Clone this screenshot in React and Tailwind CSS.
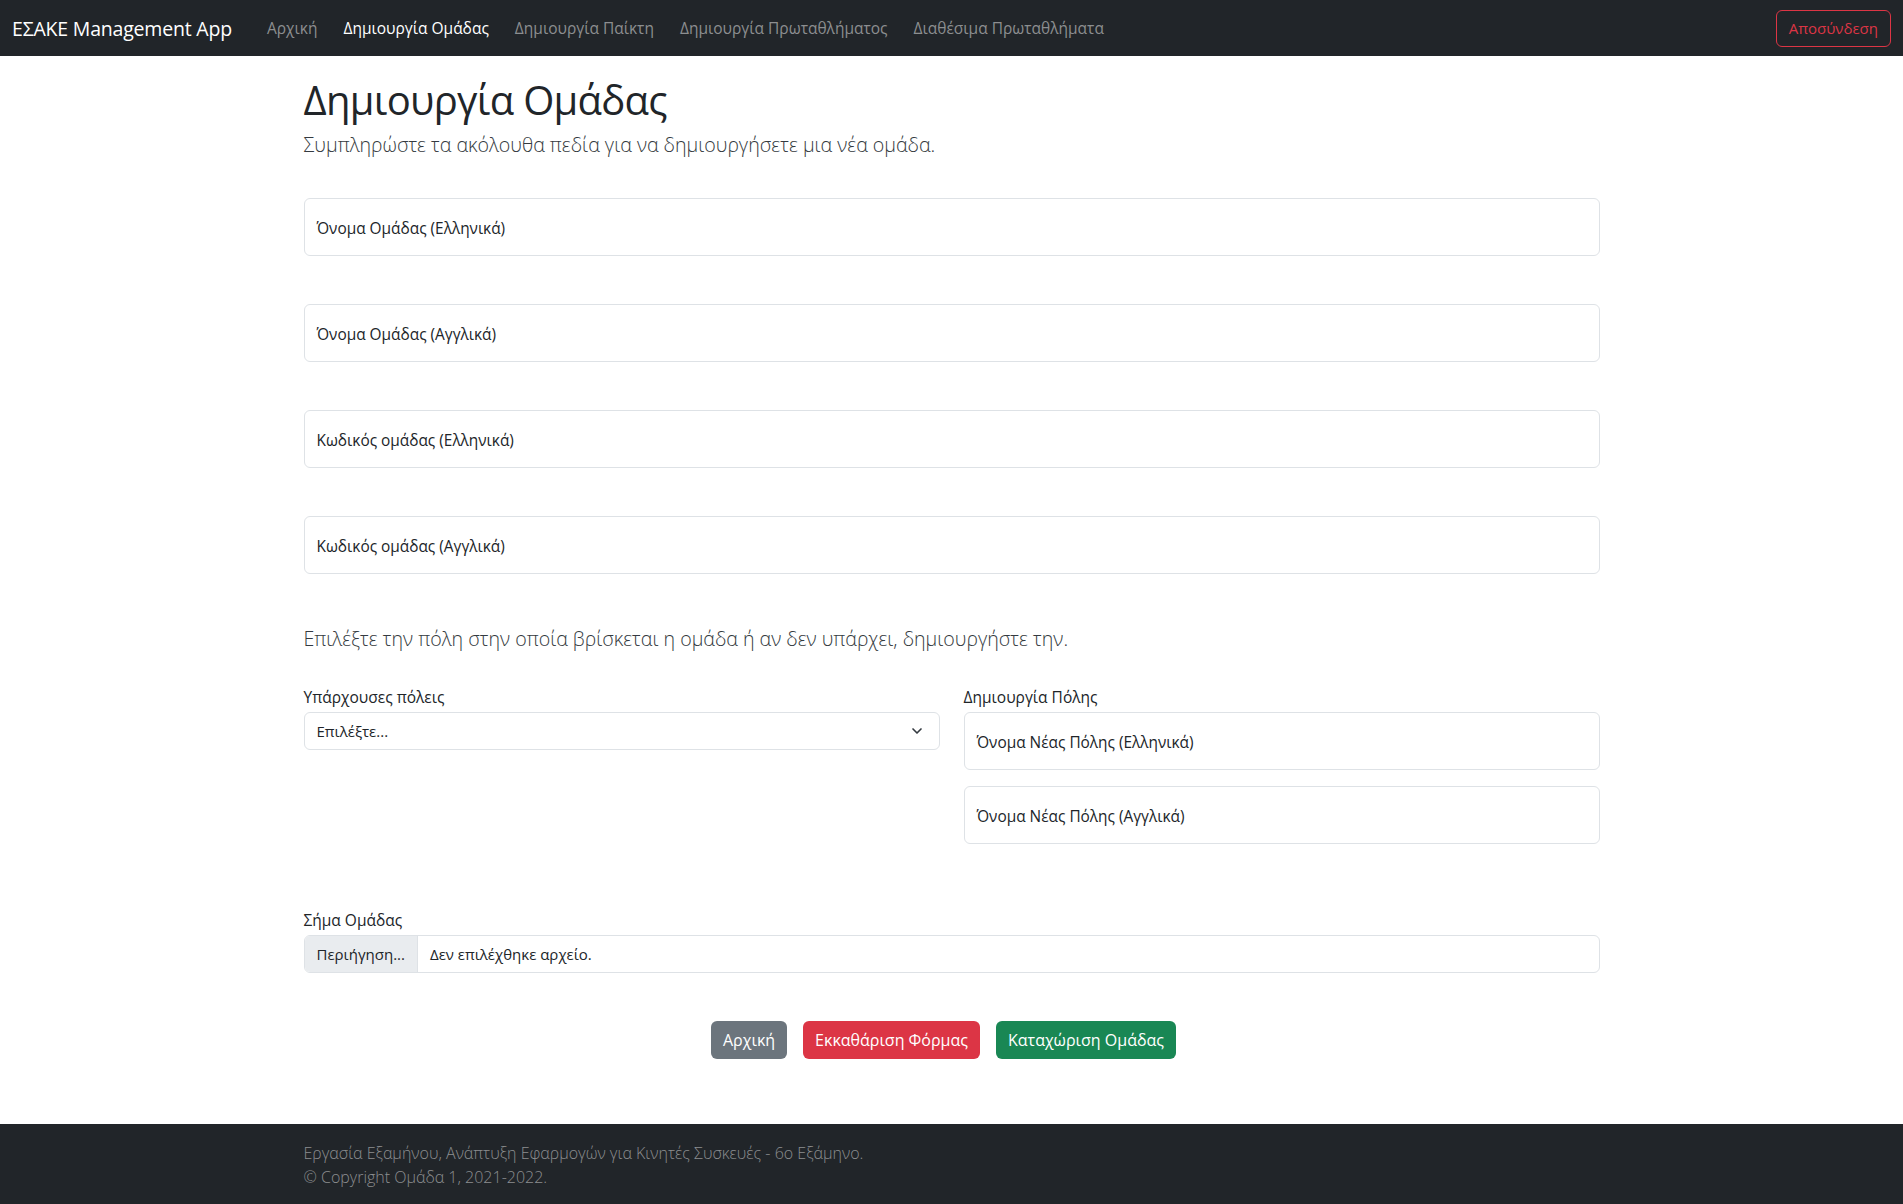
import { ChevronDown } from "lucide-react";

const font = { fontFamily: "'Open Sans', 'Noto Sans', sans-serif" };

const navLinks = [
  { label: "Αρχική", active: false },
  { label: "Δημιουργία Ομάδας", active: true },
  { label: "Δημιουργία Παίκτη", active: false },
  { label: "Δημιουργία Πρωταθλήματος", active: false },
  { label: "Διαθέσιμα Πρωταθλήματα", active: false },
];

// floating-label style input (bootstrap form-floating look)
const FloatingInput = ({ label, className = "" }) => (
  <div
    className={`h-[58px] w-full rounded-[6px] border border-[#dee2e6] bg-white flex items-center px-3 pt-[3px] text-[15.4px] text-[#212529] ${className}`}
  >
    {label}
  </div>
);

export default function App() {
  return (
    <div className="min-h-[1204px] flex flex-col bg-white text-[#212529]" style={font}>
      {/* Navbar */}
      <nav className="h-[56px] bg-[#212529] flex items-center px-3 pt-[2px]">
        <span className="text-[19.5px] text-white mr-[22px] tracking-[-0.2px]">
          ΕΣΑΚΕ Management App
        </span>
        <ul className="flex items-center">
          {navLinks.map((l) => (
            <li
              key={l.label}
              className={`px-[13px] text-[15.5px] ${
                l.active ? "text-white" : "text-[#8c8e90]"
              }`}
            >
              {l.label}
            </li>
          ))}
        </ul>
        <button className="ml-auto h-[37px] px-3 rounded-[6px] border border-[#dc3545] text-[#dc3545] text-[15px] mb-[2px]">
          Αποσύνδεση
        </button>
      </nav>

      {/* Main */}
      <main className="flex-1 w-[1296px] mx-auto pt-[20px] pb-[64px]">
        <h1 className="text-[40px] leading-[48px] font-normal tracking-[-0.7px] mb-[6px]">
          Δημιουργία Ομάδας
        </h1>
        <p className="text-[19.6px] leading-[30px] font-light text-[#343a40] mb-[38px]">
          Συμπληρώστε τα ακόλουθα πεδία για να δημιουργήσετε μια νέα ομάδα.
        </p>

        <div className="flex flex-col gap-[48px]">
          <FloatingInput label="Όνομα Ομάδας (Ελληνικά)" />
          <FloatingInput label="Όνομα Ομάδας (Αγγλικά)" />
          <FloatingInput label="Κωδικός ομάδας (Ελληνικά)" />
          <FloatingInput label="Κωδικός ομάδας (Αγγλικά)" />
        </div>

        <p className="text-[19.6px] leading-[30px] font-light text-[#343a40] mt-[50px] mb-[31px]">
          Επιλέξτε την πόλη στην οποία βρίσκεται η ομάδα ή αν δεν υπάρχει, δημιουργήστε την.
        </p>

        <div className="grid grid-cols-2 gap-x-6">
          <div>
            <label className="block text-[15.5px] leading-[24px] mb-[3px]">
              Υπάρχουσες πόλεις
            </label>
            <div className="h-[38px] rounded-[6px] border border-[#dee2e6] flex items-center justify-between pl-3 pr-[14px] text-[15px]">
              <span>Επιλέξτε...</span>
              <ChevronDown className="w-4 h-4 text-[#343a40]" strokeWidth={2.5} />
            </div>
          </div>
          <div>
            <label className="block text-[15.5px] leading-[24px] mb-[3px]">
              Δημιουργία Πόλης
            </label>
            <FloatingInput label="Όνομα Νέας Πόλης (Ελληνικά)" className="mb-4" />
            <FloatingInput label="Όνομα Νέας Πόλης (Αγγλικά)" />
          </div>
        </div>

        <div className="mt-[64px]">
          <label className="block text-[15.5px] leading-[24px] mb-[3px]">Σήμα Ομάδας</label>
          <div className="h-[38px] rounded-[6px] border border-[#dee2e6] flex items-stretch overflow-hidden text-[15px]">
            <span className="bg-[#e9ecef] border-r border-[#dee2e6] px-3 flex items-center">
              Περιήγηση...
            </span>
            <span className="px-3 flex items-center">Δεν επιλέχθηκε αρχείο.</span>
          </div>
        </div>

        <div className="flex justify-center mt-[48px]">
          <button className="h-[38px] px-3 rounded-[6px] bg-[#6c757d] text-white text-[16px] mr-4">
            Αρχική
          </button>
          <button className="h-[38px] px-3 rounded-[6px] bg-[#dc3545] text-white text-[16px] mr-4">
            Εκκαθάριση Φόρμας
          </button>
          <button className="h-[38px] px-3 rounded-[6px] bg-[#198754] text-white text-[16px] mr-4">
            Καταχώριση Ομάδας
          </button>
        </div>
      </main>

      {/* Footer */}
      <footer className="bg-[#212529] h-[80px]">
        <div className="w-[1296px] mx-auto pt-[17px] text-[16px] leading-[24px] font-light text-[#8c8e90]">
          <p>Εργασία Εξαμήνου, Ανάπτυξη Εφαρμογών για Κινητές Συσκευές - 6ο Εξάμηνο.</p>
          <p>© Copyright Ομάδα 1, 2021-2022.</p>
        </div>
      </footer>
    </div>
  );
}
